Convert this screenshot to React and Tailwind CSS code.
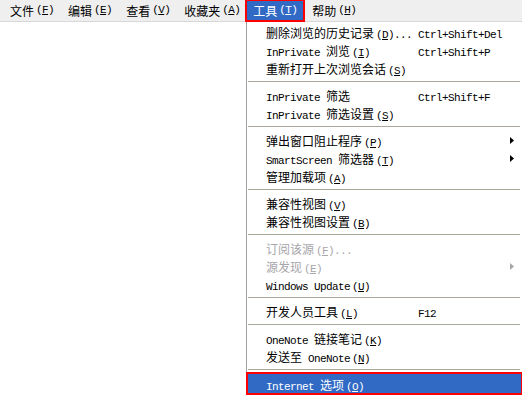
const CJK = "font-['Noto_Sans_CJK_SC','SimSun',sans-serif]";

// Split text so latin runs use a narrow mono face like SimSun's half-width glyphs
function Txt({ text, u }) {
  const parts = text.split(/([\u0000-\u00ff]+)/).filter(Boolean);
  return (
    <>
      {parts.map((p, i) =>
        /^[\u0000-\u00ff]+$/.test(p) ? (
          <span key={i} className="font-['Liberation_Mono',monospace] text-[11px] tracking-[-0.6px] whitespace-pre">
            {p}
          </span>
        ) : (
          <span key={i} className="text-[12px]">{p}</span>
        )
      )}
      {u && (
        <span className="font-['Liberation_Mono',monospace] text-[11px] tracking-[-0.6px] ml-[2px]">
          (<span className="underline">{u}</span>)
        </span>
      )}
    </>
  );
}

function Item({ label, u, tail, shortcut, arrow, disabled, active }) {
  return (
    <div
      className={`flex items-center h-[18px] pl-[19px] pr-[8px] ${
        active ? "bg-[#316ac5] text-white outline-2 outline-[#ff0000] -outline-offset-1 h-[21px] mt-[-1px]" : disabled ? "text-[#a7a6aa]" : "text-black"
      }`}
    >
      <div className="w-[152px] whitespace-nowrap leading-none">
        <Txt text={label} u={u} />
        {tail && <Txt text={tail} />}
      </div>
      <div className="flex-1 leading-none">{shortcut && <Txt text={shortcut} />}</div>
      {arrow && (
        <svg width="4" height="7" viewBox="0 0 4 7">
          <path d="M0 0L4 3.5L0 7Z" fill={disabled ? "#a7a6aa" : "#000"} />
        </svg>
      )}
    </div>
  );
}

function Sep() {
  return (
    <div className="h-[9px] flex flex-col justify-center pl-[1px] pr-[2px]">
      <div className="h-[1px] bg-[#aca899]" />
      <div className="h-[1px] bg-white" />
    </div>
  );
}

export default function App() {
  const bar = [
    ["文件", "F"],
    ["编辑", "E"],
    ["查看", "V"],
    ["收藏夹", "A"],
    ["工具", "T"],
    ["帮助", "H"],
  ];
  return (
    <div className={`relative w-[522px] h-[395px] bg-white overflow-hidden ${CJK}`}>
      <div className="flex h-[22px] bg-[#efefef] border-b border-[#d8d8d8] pl-[5px]">
        {bar.map(([t, k]) => (
          <div
            key={t}
            className={`flex items-center leading-none ${
              k === "T"
                ? "bg-[#316ac5] text-white outline-2 outline-[#ff0000] -outline-offset-1 ml-[-3px] px-[7px] mr-[3px]"
                : "text-black px-[5px] mr-[4px]"
            }`}
          >
            <Txt text={t} u={k} />
          </div>
        ))}
      </div>

      <div className="absolute left-[246px] top-[22px] w-[276px] bottom-0 bg-white border-l border-[#a0a0a0] pt-[1px]">
        <Item label="删除浏览的历史记录" u="D" tail="..." shortcut="Ctrl+Shift+Del" />
        <Item label="InPrivate 浏览" u="I" shortcut="Ctrl+Shift+P" />
        <Item label="重新打开上次浏览会话" u="S" />
        <Sep />
        <Item label="InPrivate 筛选" shortcut="Ctrl+Shift+F" />
        <Item label="InPrivate 筛选设置" u="S" />
        <Sep />
        <Item label="弹出窗口阻止程序" u="P" arrow />
        <Item label="SmartScreen 筛选器" u="T" arrow />
        <Item label="管理加载项" u="A" />
        <Sep />
        <Item label="兼容性视图" u="V" />
        <Item label="兼容性视图设置" u="B" />
        <Sep />
        <Item label="订阅该源" u="F" tail="..." disabled />
        <Item label="源发现" u="E" disabled arrow />
        <Item label="Windows Update" u="U" />
        <Sep />
        <Item label="开发人员工具" u="L" shortcut="F12" />
        <Sep />
        <Item label="OneNote 链接笔记" u="K" />
        <Item label="发送至 OneNote" u="N" />
        <Sep />
        <Item label="Internet 选项" u="O" active />
      </div>
    </div>
  );
}
